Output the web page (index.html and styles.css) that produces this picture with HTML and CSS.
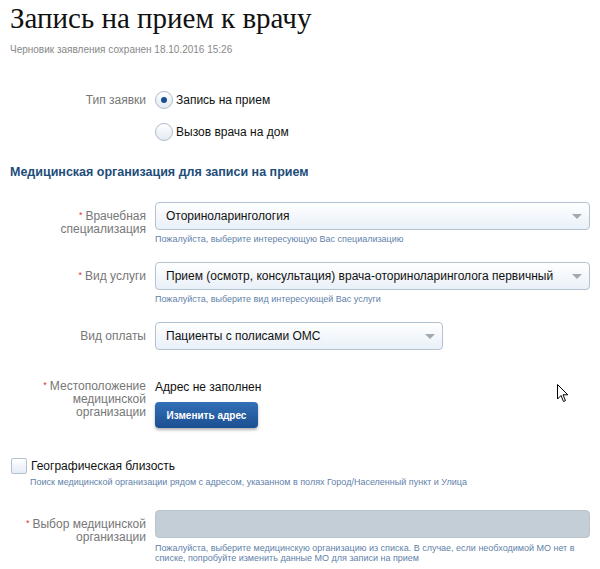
FILE: index.html
```html
<!DOCTYPE html>
<html lang="ru">
<head>
  <meta charset="UTF-8">
  <title>Запись на прием к врачу</title>
  <link rel="stylesheet" href="styles.css">
</head>
<body>
  <h1>Запись на прием к врачу</h1>
  <p class="draft">Черновик заявления сохранен 18.10.2016 15:26</p>

  <div class="row type-row">
    <div class="label">Тип заявки</div>
    <div class="field">
      <label class="radio"><span class="dot checked"></span>Запись на прием</label>
      <label class="radio"><span class="dot"></span>Вызов врача на дом</label>
    </div>
  </div>

  <h2>Медицинская организация для записи на прием</h2>

  <div class="row first-row">
    <div class="label"><span class="req">*</span>Врачебная<br>специализация</div>
    <div class="field">
      <div class="select">Оториноларингология<span class="arrow"></span></div>
      <div class="hint">Пожалуйста, выберите интересующую Вас специализацию</div>
    </div>
  </div>

  <div class="row">
    <div class="label"><span class="req">*</span>Вид услуги</div>
    <div class="field">
      <div class="select">Прием (осмотр, консультация) врача-оториноларинголога первичный<span class="arrow"></span></div>
      <div class="hint">Пожалуйста, выберите вид интересующей Вас услуги</div>
    </div>
  </div>

  <div class="row pay-row">
    <div class="label">Вид оплаты</div>
    <div class="field">
      <div class="select short">Пациенты с полисами ОМС<span class="arrow"></span></div>
    </div>
  </div>

  <div class="row place-row">
    <div class="label"><span class="req">*</span>Местоположение<br>медицинской<br>организации</div>
    <div class="field">
      <div class="address">Адрес не заполнен</div>
      <button class="btn">Изменить адрес</button>
    </div>
  </div>

  <div class="geo">
    <label class="check"><span class="box"></span>Географическая близость</label>
    <div class="hint">Поиск медицинской организации рядом с адресом, указанном в полях Город/Населенный пункт и Улица</div>
  </div>

  <div class="row mo-row">
    <div class="label"><span class="req">*</span>Выбор медицинской<br>организации</div>
    <div class="field">
      <div class="select disabled"></div>
      <div class="hint">Пожалуйста, выберите медицинскую организацию из списка. В случае, если необходимой МО нет в списке, попробуйте изменить данные МО для записи на прием</div>
    </div>
  </div>

  <svg class="cursor" width="12" height="19" viewBox="0 0 12 19">
    <path d="M0.5 0.5 L0.5 15 L4 11.5 L6.5 17.5 L8.5 16.6 L6 10.8 L10.8 10.8 Z" fill="#fff" stroke="#000" stroke-width="1"/>
  </svg>
</body>
</html>
```

FILE: styles.css
```css
body {
  margin: 0;
  padding: 0 10px;
  background: #fff;
  font-family: "Liberation Sans", Arial, sans-serif;
  color: #111;
  position: relative;
  height: 569px;
  overflow: hidden;
}

h1 {
  font-family: "Liberation Serif", "Times New Roman", serif;
  font-weight: normal;
  font-size: 29px;
  margin: 1px 0 0;
  line-height: 34px;
  color: #111;
}

.draft {
  font-size: 10px;
  color: #888;
  margin: 9px 0 0;
}

.row {
  display: flex;
  margin-top: 18px;
}

.label {
  width: 136px;
  margin-right: 9px;
  text-align: right;
  font-size: 12px;
  line-height: 13px;
  color: #777;
  padding-top: 8px;
}

.req {
  display: inline-block;
  color: #e0333a;
  font-size: 9px;
  line-height: 9px;
  margin-right: 3px;
  vertical-align: 2px;
}

.field {
  flex: 1;
}

.type-row {
  margin-top: 35px;
}

.type-row .label {
  padding-top: 4px;
}

.radio {
  display: flex;
  align-items: center;
  font-size: 12px;
  height: 19px;
  margin-bottom: 13px;
}

.dot {
  position: relative;
  box-sizing: border-box;
  width: 18px;
  height: 18px;
  border-radius: 50%;
  border: 1px solid #aebccb;
  background: linear-gradient(#fff, #e2eaf3);
  margin-right: 3px;
}

.dot.checked::after {
  content: "";
  position: absolute;
  left: 5px;
  top: 5px;
  width: 6px;
  height: 6px;
  border-radius: 50%;
  background: #1a4f8f;
}

h2 {
  font-size: 12.5px;
  font-weight: bold;
  color: #1d4d7a;
  margin: 11px 0 0;
}

.first-row {
  margin-top: 23px;
}

.select {
  position: relative;
  height: 28px;
  box-sizing: border-box;
  border: 1px solid #b3c2d1;
  border-radius: 4px;
  background: linear-gradient(#fff, #e9f0f8);
  font-size: 12px;
  line-height: 26px;
  padding-left: 10px;
  color: #111;
}

.select.short {
  width: 288px;
}

.select.disabled {
  background: #c3ced6;
  border-color: #b8c5cf;
}

.arrow {
  position: absolute;
  right: 7px;
  top: 11px;
  border-left: 5px solid transparent;
  border-right: 5px solid transparent;
  border-top: 5px solid #a4a9ae;
}

.hint {
  font-size: 9px;
  color: #5f82aa;
  margin-top: 4px;
  line-height: 10px;
}

.pay-row {
  margin-top: 18px;
}

.place-row {
  margin-top: 30px;
}

.place-row .label {
  padding-top: 0;
}

.address {
  font-size: 12px;
  line-height: 14px;
}

.btn {
  margin-top: 8px;
  width: 103px;
  height: 26px;
  border: none;
  border-radius: 4px;
  background: linear-gradient(#3270b7, #1c4f90);
  box-shadow: 0 2px 3px rgba(0, 0, 0, 0.3);
  color: #fff;
  font-family: "Liberation Sans", Arial, sans-serif;
  font-weight: bold;
  font-size: 10px;
  padding: 0;
}

.geo {
  margin-top: 29px;
}

.check {
  display: flex;
  align-items: center;
  font-size: 12px;
  height: 17px;
}

.box {
  width: 16px;
  height: 16px;
  box-sizing: border-box;
  border: 1px solid #b3c0cd;
  border-radius: 2px;
  background: linear-gradient(#fff, #e4ecf5);
  margin: 0 4px 0 1px;
}

.geo .hint {
  margin: 3px 0 0 20px;
}

.mo-row {
  margin-top: 23px;
}

.mo-row .hint {
  margin-top: 5px;
}

.cursor {
  position: absolute;
  left: 557px;
  top: 384px;
}
```
